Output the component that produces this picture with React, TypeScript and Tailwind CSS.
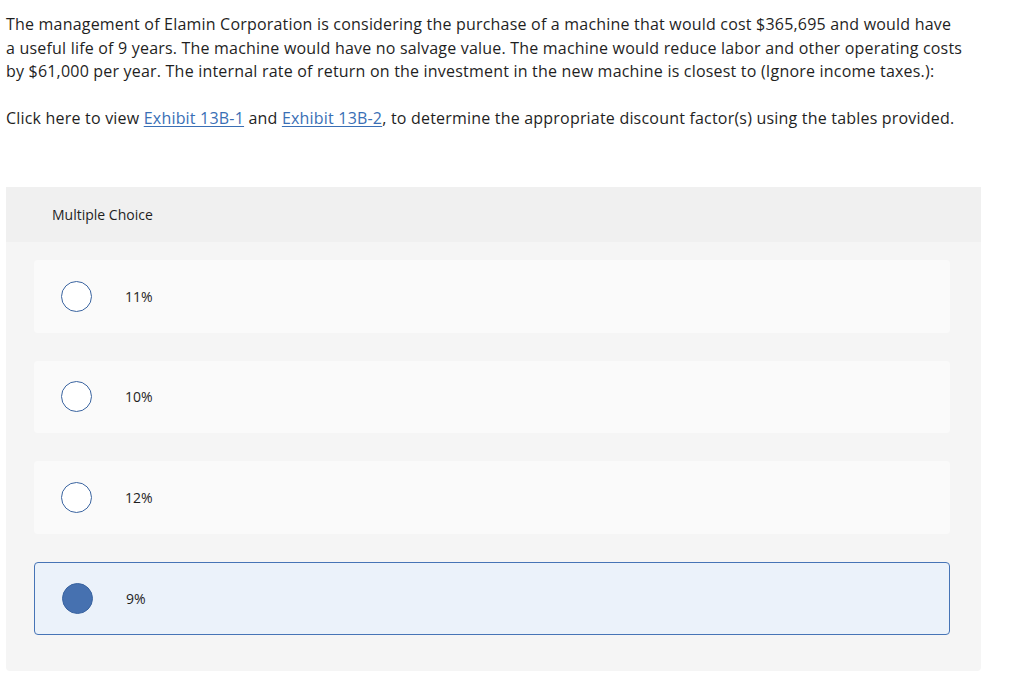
import type React from 'react';

const options = [
  { label: '11%', selected: false },
  { label: '10%', selected: false },
  { label: '12%', selected: false },
  { label: '9%', selected: true },
];

const App: React.FC = () => {
  return (
    <div className="min-h-[676px] bg-white pl-[6px] pt-[13px] text-[#1f1f1f]" style={{ fontFamily: "'Open Sans', 'Liberation Sans', sans-serif" }}>
      <div className="w-[1010px] text-[16px] leading-[23.5px] tracking-[0.2px]">
        <p>
          The management of Elamin Corporation is considering the purchase of a machine that would cost $365,695 and would
          have
          <br />
          a useful life of 9 years. The machine would have no salvage value. The machine would reduce labor and other
          operating costs
          <br />
          by $61,000 per year. The internal rate of return on the investment in the new machine is closest to (Ignore
          income taxes.):
        </p>
        <p className="mt-[23px]">
          Click here to view{' '}
          <a className="text-[#3a6fb5] underline underline-offset-2">Exhibit 13B-1</a> and{' '}
          <a className="text-[#3a6fb5] underline underline-offset-2">Exhibit 13B-2</a>, to determine the appropriate
          discount factor(s) using the tables provided.
        </p>
      </div>

      <div className="mt-[57px] w-[975px] rounded-sm bg-[#f5f5f5] pb-[36px]">
        <div className="flex h-[55px] items-center bg-[#f0f0f0] pl-[46px] text-[14px]">Multiple Choice</div>
        <div className="flex flex-col gap-[28px] pl-[28px] pr-[31px] pt-[18px]">
          {options.map(option => (
            <div
              key={option.label}
              className={`flex h-[72.67px] items-center rounded-sm pl-[27px] ${
                option.selected ? 'border border-[#4674b6] bg-[#ebf2fa]' : 'bg-[#fafafa]'
              }`}>
              <span
                className={`h-[31px] w-[31px] shrink-0 rounded-full border ${
                  option.selected ? 'border-[#3a64a0] bg-[#4671b0]' : 'border-[#3a64a0] bg-white'
                }`}
              />
              <span className="ml-[33px] text-[14px]">{option.label}</span>
            </div>
          ))}
        </div>
      </div>
    </div>
  );
};

export default App;
